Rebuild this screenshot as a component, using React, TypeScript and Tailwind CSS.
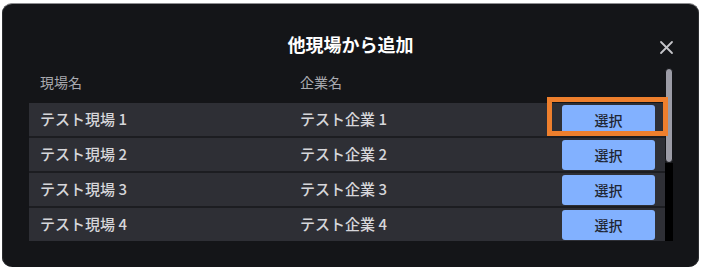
import React from "react";

interface Site {
  site: string;
  company: string;
}

const sites: Site[] = [
  { site: "テスト現場 1", company: "テスト企業 1" },
  { site: "テスト現場 2", company: "テスト企業 2" },
  { site: "テスト現場 3", company: "テスト企業 3" },
  { site: "テスト現場 4", company: "テスト企業 4" },
];

const font = "font-['Noto_Sans_CJK_JP','Noto_Sans',sans-serif]";

export default function App() {
  return (
    <div className={`w-[702px] h-[270px] bg-white pt-[3px] pl-[2px] ${font}`}>
      <div className="relative w-[697px] h-[264px] rounded-[10px] bg-[#141518] border-t border-[#8d8d90] shadow-[inset_1px_0_0_#2c2d30,inset_-1px_0_0_#2c2d30]">
        {/* Title */}
        <div className="pt-[27px] text-center text-[18px] leading-[26px] font-bold text-white">
          他現場から追加
        </div>

        {/* Close */}
        <button
          className="absolute right-[24px] top-[35px] w-[17px] h-[17px] flex items-center justify-center text-[#c4c4c8]"
          aria-label="close"
        >
          <svg width="15" height="15" viewBox="0 0 15 15" fill="none" stroke="currentColor" strokeWidth="1.8" strokeLinecap="round">
            <line x1="2" y1="2" x2="13" y2="13" />
            <line x1="13" y1="2" x2="2" y2="13" />
          </svg>
        </button>

        {/* Table */}
        <div className="mt-[9px] pl-[27px] pr-[26px] flex">
          <div className="flex-1 flex flex-col">
            <div className="h-[37px] pb-[5px] flex items-center text-[14px] text-[#a9aab0]">
              <div className="w-[271px] pl-[11px]">現場名</div>
              <div className="flex-1">企業名</div>
            </div>
            <div className="flex flex-col gap-[2px] bg-[#1c1d21]">
              {sites.map((s, i) => (
                <div key={s.site} className="relative h-[33px] bg-[#2e2f35] flex items-center text-[15px] font-medium text-[#d6d6da]">
                  <div className="w-[271px] pl-[11px]">{s.site}</div>
                  <div className="flex-1">{s.company}</div>
                  <button className="mr-[10px] mt-[1px] w-[93px] h-[30px] rounded-[3px] bg-[#82b1ff] text-[14px] text-[#1f2633]">
                    選択
                  </button>
                  {i === 0 && (
                    <div className="absolute z-10 left-[518px] top-[-6px] w-[121px] h-[39px] border-[5px] border-[#ee7f2d]" />
                  )}
                </div>
              ))}
            </div>
          </div>

          {/* Scrollbar */}
          <div className="w-[8px] flex flex-col">
            <div className="mt-[2px] h-[95px] rounded-full bg-[#9c9ca6] border border-[#141518]" />
            <div className="flex-1 bg-black" />
          </div>
        </div>
      </div>
    </div>
  );
}
